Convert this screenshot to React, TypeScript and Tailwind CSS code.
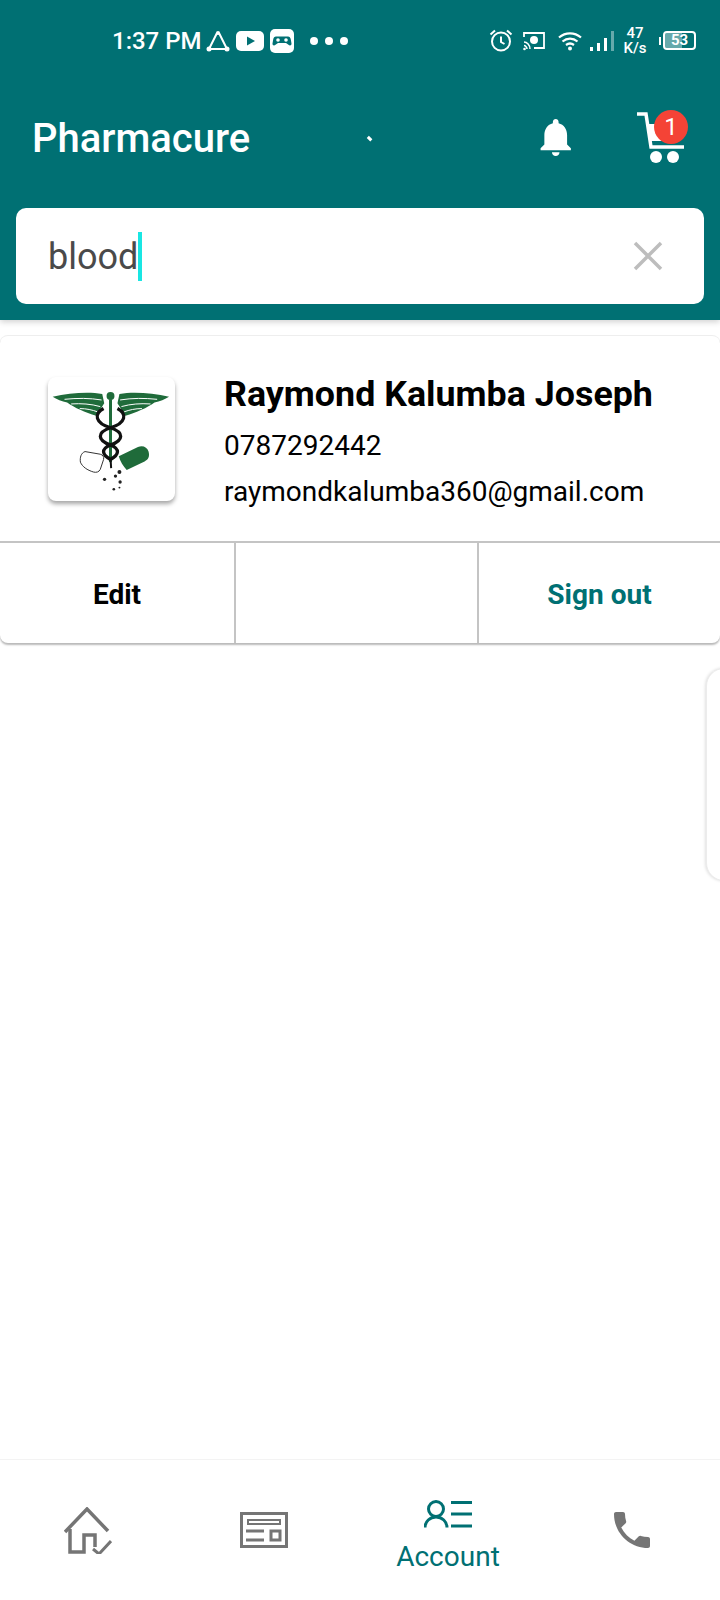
const Triangle = () => (
  <svg width="24" height="22" viewBox="0 0 24 22" fill="none" stroke="white" strokeWidth="2" className="ml-[4px]">
    <path d="M11 3 3 19h18L13 3" />
    <circle cx="12" cy="3" r="2" fill="white" stroke="none" />
    <circle cx="3" cy="19" r="2.5" fill="white" stroke="none" />
    <circle cx="21" cy="19" r="2.5" fill="white" stroke="none" />
  </svg>
);

const Youtube = () => (
  <svg width="28" height="20" viewBox="0 0 28 20" className="ml-[6px]">
    <rect width="28" height="20" rx="5" fill="white" />
    <path d="M11 5.500v9l8-4.500z" fill="#007073" />
  </svg>
);

const GameIcon = () => (
  <svg width="24" height="24" viewBox="0 0 24 24" className="ml-[6px]">
    <rect width="24" height="24" rx="5" fill="white" />
    <path d="M6 7.500h12c1.500 0 2.500 1 2.800 3l.7 4c.2 2-1.800 2.600-3 1.200L16 14H8l-2.500 1.700c-1.200 1.400-3.200.8-3-1.200l.7-4c.3-2 1.300-3 2.800-3z" fill="#007073" />
    <circle cx="8" cy="11" r="1.800" fill="white" />
    <circle cx="16" cy="11" r="1.800" fill="white" />
  </svg>
);

const Alarm = () => (
  <svg width="24" height="23" viewBox="0 0 24 23" fill="none" stroke="white" strokeWidth="2">
    <circle cx="12" cy="12.500" r="9" />
    <path d="M12 7.500v5.500l3.500 2M1.500 5.500 6 1.500M22.500 5.500 18 1.500" />
  </svg>
);

const Cast = () => (
  <svg width="22" height="20" viewBox="0 0 22 20" fill="none" className="ml-[10px]">
    <path d="M1 6V2h20v15H11" stroke="white" strokeWidth="1.800" />
    <circle cx="11" cy="9" r="4" fill="white" />
    <path d="M1 11c3 0 6 3 6 7M1 14.500c1.500 0 3 2 3 3.500" stroke="white" strokeWidth="1.500" />
    <circle cx="1.500" cy="18" r="1.300" fill="white" />
  </svg>
);

const Wifi = () => (
  <svg width="24" height="20" viewBox="0 0 24 20" fill="none" stroke="white" strokeWidth="2.200" className="ml-[13px]">
    <path d="M1 6.500c6.500-5.600 15.500-5.600 22 0M4.500 10.500c4.500-3.800 10.500-3.800 15 0M8 14c2.400-1.800 5.600-1.800 8 0" />
    <circle cx="12" cy="17.500" r="2" fill="white" stroke="none" />
  </svg>
);

const Signal = () => (
  <div className="ml-[8px] flex h-[20px] items-end gap-[4px]">
    <div className="h-[4px] w-[3px] bg-white" />
    <div className="h-[8px] w-[3px] bg-white" />
    <div className="h-[13px] w-[3px] bg-white" />
    <div className="h-[20px] w-[3px] bg-white/40" />
  </div>
);

const Battery = () => (
  <div className="ml-[11px] flex items-center">
    <div className="mr-[2px] h-[8px] w-[2px] bg-white" />
    <div className="relative flex h-[19px] w-[33px] items-center justify-center overflow-hidden rounded-[4px] border-2 border-white">
      <div className="absolute inset-y-0 left-0 w-[60%] bg-white/40" />
      <span className="relative text-[15px] font-bold leading-none text-white">53</span>
    </div>
  </div>
);

const StatusBar = () => (
  <div className="flex h-[80px] items-center pl-[112px] pr-[24px] pt-[1px]">
    <span className="text-[24px] font-medium leading-none text-white">1:37 PM</span>
    <Triangle />
    <Youtube />
    <GameIcon />
    <div className="ml-[16px] flex gap-[7px]">
      <div className="h-[8px] w-[8px] rounded-full bg-white" />
      <div className="h-[8px] w-[8px] rounded-full bg-white" />
      <div className="h-[8px] w-[8px] rounded-full bg-white" />
    </div>
    <div className="ml-auto flex items-center">
      <Alarm />
      <Cast />
      <Wifi />
      <Signal />
      <div className="ml-[8px] flex w-[26px] flex-col items-center text-[15px] font-medium leading-[15px] text-white">
        <span>47</span>
        <span>K/s</span>
      </div>
      <Battery />
    </div>
  </div>
);

const CartIcon = () => (
  <div className="relative ml-[58px] -mt-[2px] h-[54px] w-[52px]">
    <svg width="52" height="54" viewBox="0 0 52 54" fill="none">
      <path d="M1 4h9l5 33h33" stroke="white" strokeWidth="3.500" />
      <path d="M12 14h18v17H15z" fill="white" />
      <circle cx="20" cy="47" r="6" fill="white" />
      <circle cx="37" cy="47" r="6" fill="white" />
    </svg>
    <div className="absolute left-[18px] top-0 flex h-[34px] w-[34px] items-center justify-center rounded-full bg-[#f44336] text-[24px] leading-none text-white">
      1
    </div>
  </div>
);

const Header = () => (
  <div className="relative z-10 bg-[#007073] shadow-[0_2px_6px_rgba(0,0,0,0.18)]">
    <StatusBar />
    <div className="flex h-[128px] items-center pb-[12px] pl-[32px] pr-[32px]">
      <span className="pt-[2px] text-[40px] font-medium leading-none text-white">Pharmacure</span>
      <div className="ml-[118px] h-[5px] w-[4px] -rotate-45 bg-white" />
      <svg width="54" height="54" viewBox="0 0 24 24" fill="white" className="ml-[161px] -mt-[2px]">
        <path d="M12 22c1.100 0 2-.9 2-2h-4c0 1.100.9 2 2 2zm6-6v-5c0-3.070-1.630-5.640-4.500-6.320V4c0-.83-.67-1.500-1.500-1.500s-1.500.67-1.500 1.500v.68C7.640 5.360 6 7.920 6 11v5l-2 2v1h16v-1l-2-2z" />
      </svg>
      <CartIcon />
    </div>
    <div className="px-[16px] pb-[16px]">
      <div className="flex h-[96px] items-center rounded-[10px] bg-white pl-[32px] pr-[40px]">
        <span className="pt-[2px] text-[36px] leading-none text-[#4a4a4a]">blood</span>
        <div className="h-[49px] w-[4px] bg-[#19e6e3]" />
        <svg width="32" height="32" viewBox="0 0 32 32" stroke="#bdbdbd" strokeWidth="3.500" className="ml-auto">
          <path d="M3 3l26 26M29 3 3 29" />
        </svg>
      </div>
    </div>
  </div>
);

const Logo = () => (
  <div className="h-[124px] w-[127px] rounded-[8px] bg-white shadow-[0_3px_4px_rgba(0,0,0,0.35)]">
    <svg width="127" height="124" viewBox="54 52 384 372" fill="none">
      <path d="M68 110c50-10 105-16 150-8l6 28-24 38c-34-10-66-24-88-40-16-4-32-10-44-18z" fill="#1f6b3a" />
      <path d="M420 110c-50-10-105-16-150-8l-6 28 24 38c34-10 66-24 88-40 16-4 32-10 44-18z" fill="#1f6b3a" />
      <path d="M104 118c38-4 76-4 112 2M124 132c30-2 60 0 88 8M150 146c20 0 38 4 54 10M384 118c-38-4-76-4-112 2M364 132c-30-2-60 0-88 8M338 146c-20 0-38 4-54 10" stroke="white" strokeWidth="3" />
      <circle cx="243" cy="108" r="12" fill="#1f6b3a" />
      <path d="M243 118v190" stroke="#1f6b3a" strokeWidth="9" />
      <path d="M222 146c-30 16-26 44 21 58 42 14 40 38 0 52-30 12-26 30 0 44M264 146c30 16 26 44-21 58-42 14-40 38 0 52 30 12 26 30 0 44" stroke="#111" strokeWidth="10" />
      <path d="M243 296l2 30" stroke="#111" strokeWidth="6" />
      <path d="M166 276l46 8c8 2 12 8 10 16l-10 30c-4 8-12 10-20 8-20-6-34-16-40-30-2-14 2-28 14-32z" stroke="#333" strokeWidth="3" fill="white" />
      <path d="M268 290l58-28c14-6 28 0 32 14 4 14 0 24-12 30l-54 26c-10-12-20-26-24-42z" fill="#1f6b3a" />
      <g fill="#222">
        <circle cx="225" cy="360" r="5" />
        <circle cx="258" cy="350" r="5" />
        <circle cx="270" cy="338" r="6" />
        <circle cx="272" cy="368" r="5" />
        <circle cx="253" cy="390" r="4" />
        <circle cx="270" cy="385" r="3" />
      </g>
    </svg>
  </div>
);

const ProfileCard = () => (
  <div className="mt-[15px] rounded-[8px] border-t border-[#eeeeee] bg-white shadow-[0_2px_2px_rgba(0,0,0,0.28)]">
    <div className="flex h-[205px] items-start pl-[48px] pt-[41px]">
      <Logo />
      <div className="ml-[49px] -mt-[7px] flex flex-col">
        <span className="text-[35.8px] font-bold leading-[48px] text-black">Raymond Kalumba Joseph</span>
        <span className="mt-[8px] text-[28px] leading-[40px] text-black">0787292442</span>
        <span className="mt-[6px] text-[28px] leading-[40px] text-black">raymondkalumba360@gmail.com</span>
      </div>
    </div>
    <div className="flex h-[102px] border-t-2 border-[#c4c4c4]">
      <div className="flex w-[236px] items-center justify-center border-r-2 border-[#c4c4c4] pt-[3px] text-[28px] font-bold text-black">
        Edit
      </div>
      <div className="w-[243px] border-r-2 border-[#c4c4c4]" />
      <div className="flex flex-1 items-center justify-center pt-[3px] text-[28px] font-bold text-[#007073]">
        Sign out
      </div>
    </div>
  </div>
);

const HomeIcon = () => (
  <svg width="48" height="47" viewBox="0 0 48 47" fill="none" stroke="#757575" strokeWidth="3.500">
    <path d="M1 25 23 2l21 22" />
    <path d="M6 22v23h14V28h11v12" />
    <path d="M29 42l6 5 12-13" strokeWidth="3" />
  </svg>
);

const NewsIcon = () => (
  <svg width="48" height="36" viewBox="0 0 48 36" fill="none" stroke="#757575" strokeWidth="3">
    <rect x="1.500" y="1.500" width="45" height="33" />
    <rect x="8" y="8" width="32" height="4" strokeWidth="2" />
    <path d="M6 19h18M6 28h18" />
    <rect x="31" y="19" width="9" height="9" />
  </svg>
);

const AccountIcon = () => (
  <svg width="48" height="28" viewBox="0 0 48 28" fill="none" stroke="#007073" strokeWidth="3">
    <circle cx="12" cy="9" r="7.500" />
    <path d="M1 27.500c0-6 5-10.500 11-10.500s11 4.500 11 10.500" />
    <path d="M27 2.500h21M27 14h21M27 26h21" />
  </svg>
);

const BottomNav = () => (
  <div className="absolute inset-x-0 bottom-0 grid h-[141px] grid-cols-4 border-t-[1.500px] border-[#f3f3f3] bg-white">
    <div className="flex items-center justify-center pr-[4px]">
      <HomeIcon />
    </div>
    <div className="flex items-center justify-center pb-[2px] pr-[12px] pt-[2px]">
      <NewsIcon />
    </div>
    <div className="flex flex-col items-center pr-[4px] pt-[40px]">
      <AccountIcon />
      <span className="mt-[9px] text-[28px] leading-[40px] text-[#007073]">Account</span>
    </div>
    <div className="flex items-center justify-center pl-[4px]">
      <svg width="48" height="48" viewBox="0 0 24 24" fill="#757575">
        <path d="M6.620 10.790c1.440 2.830 3.760 5.140 6.590 6.590l2.200-2.200c.27-.27.67-.36 1.020-.24 1.120.37 2.330.57 3.570.57.55 0 1 .45 1 1V20c0 .55-.45 1-1 1-9.390 0-17-7.610-17-17 0-.55.45-1 1-1h3.500c.55 0 1 .45 1 1 0 1.250.2 2.450.57 3.570.11.35.03.74-.25 1.020l-2.200 2.200z" />
      </svg>
    </div>
  </div>
);

export default function App() {
  return (
    <div className="relative h-[1600px] w-[720px] overflow-hidden bg-white font-['Roboto',sans-serif]">
      <Header />
      <ProfileCard />
      {/* tab peeking in from the right edge */}
      <div className="absolute left-[706px] top-[668px] h-[213px] w-[40px] rounded-[18px] border border-[#ececec] bg-white shadow-[-1px_0_3px_rgba(0,0,0,0.12)]" />
      <BottomNav />
    </div>
  );
}
